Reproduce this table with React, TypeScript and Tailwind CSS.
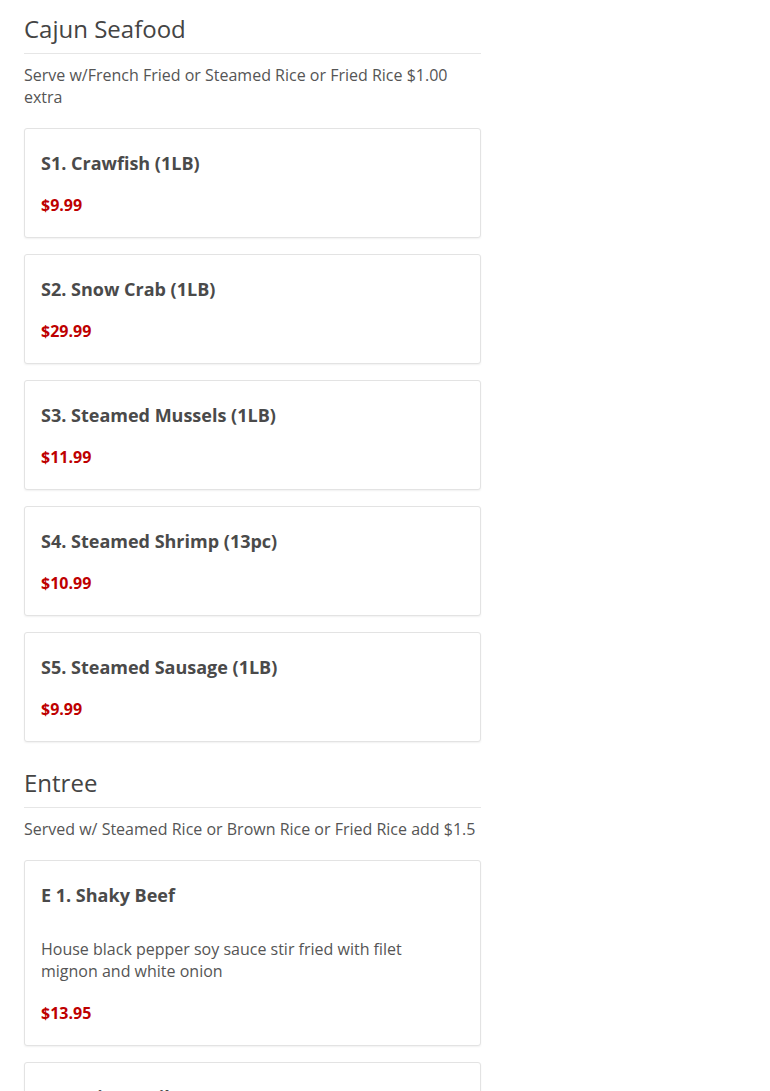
import React from "react";

type Item = { name: string; price: string; desc?: string };

const sections: { title: string; note: string; items: Item[] }[] = [
  {
    title: "Cajun Seafood",
    note: "Serve w/French Fried or Steamed Rice or Fried Rice $1.00 extra",
    items: [
      { name: "S1. Crawfish (1LB)", price: "$9.99" },
      { name: "S2. Snow Crab (1LB)", price: "$29.99" },
      { name: "S3. Steamed Mussels (1LB)", price: "$11.99" },
      { name: "S4. Steamed Shrimp (13pc)", price: "$10.99" },
      { name: "S5. Steamed Sausage (1LB)", price: "$9.99" },
    ],
  },
  {
    title: "Entree",
    note: "Served w/ Steamed Rice or Brown Rice or Fried Rice add $1.5",
    items: [
      {
        name: "E 1. Shaky Beef",
        desc: "House black pepper soy sauce stir fried with filet mignon and white onion",
        price: "$13.95",
      },
      {
        name: "E 2. Spicy Basil Leaves",
        desc: "Stir fried with bell pepper, onion and fresh basil leaves",
        price: "$12.95",
      },
    ],
  },
];

function MenuCard({ item }: { item: Item }) {
  return (
    <div className="rounded-[3px] border border-[#e3e3e3] bg-white pl-4 pr-8 pt-[22px] pb-[21px] shadow-[0_1px_2px_rgba(0,0,0,0.06)]">
      <h3 className="text-[18px] leading-6 font-bold text-[#4a4a4a]">{item.name}</h3>
      {item.desc && (
        <p className="mt-[31px] text-[16px] leading-[22px] text-[#555]">{item.desc}</p>
      )}
      <div className={`${item.desc ? "mt-5" : "mt-[19px]"} text-[16px] leading-[22px] font-bold text-[#be0000]`}>
        {item.price}
      </div>
    </div>
  );
}

export default function App() {
  return (
    <div className="min-h-screen bg-white font-['Open_Sans',sans-serif]">
      <div className="w-[457px] ml-6 pt-[14px]">
        {sections.map((s, i) => (
          <section key={s.title} className={i > 0 ? "mt-[26px]" : ""}>
            <h2 className="text-[24px] leading-[30px] text-[#444] pb-[9px] border-b border-[#e6e6e6]">
              {s.title}
            </h2>
            <p className="mt-[10px] text-[16px] leading-[22px] text-[#555]">{s.note}</p>
            <div className="mt-5 flex flex-col gap-4">
              {s.items.map((it) => (
                <MenuCard key={it.name} item={it} />
              ))}
            </div>
          </section>
        ))}
      </div>
    </div>
  );
}
